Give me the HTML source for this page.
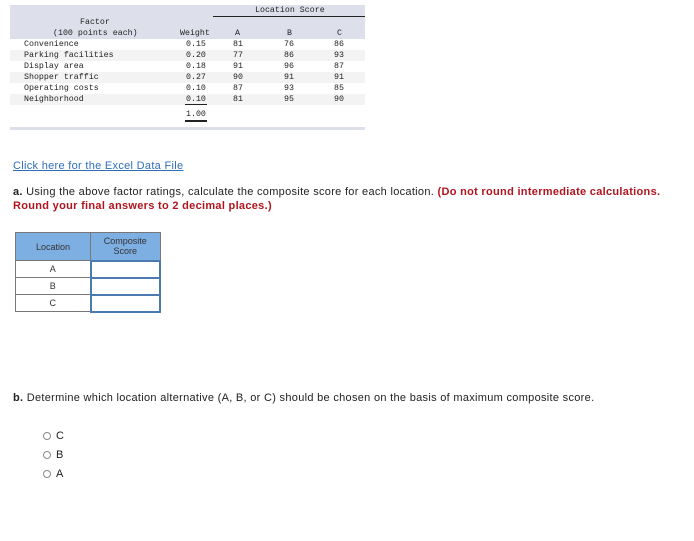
<!DOCTYPE html>
<html><head><style>
body{margin:0;width:694px;height:541px;background:#fff;position:relative;overflow:hidden;font-family:"Liberation Sans",sans-serif;}
.a{position:absolute;white-space:nowrap;}
.m{font-family:"Liberation Mono",monospace;font-size:8.3px;color:#222;line-height:11px;}
.s{font-size:11px;color:#222;letter-spacing:0.3px;}
.rad{position:absolute;width:6px;height:6px;border:1px solid #888;border-radius:50%;left:43px;}
td{border:1px solid #777;padding:0;text-align:center;font-size:9px;color:#333;}
</style></head><body>
<div class="a" style="left:10px;top:5px;width:355px;height:34px;background:#dde0ea"></div>
<div class="a" style="left:10px;top:50px;width:355px;height:11px;background:#f3f3f3"></div>
<div class="a" style="left:10px;top:72px;width:355px;height:11px;background:#f3f3f3"></div>
<div class="a" style="left:10px;top:94px;width:355px;height:11px;background:#f3f3f3"></div>
<div class="a" style="left:10px;top:127px;width:355px;height:3px;background:#dde0ea"></div>
<div class="a" style="left:213px;top:16px;width:152px;height:1px;background:#222"></div>
<div class="a m" style="left:255px;top:5px">Location Score</div>
<div class="a m" style="left:80px;top:17px">Factor</div>
<div class="a m" style="left:53px;top:28px">(100 points each)</div>
<div class="a m" style="left:180px;top:28px">Weight</div>
<div class="a m" style="left:235px;top:28px">A</div>
<div class="a m" style="left:287px;top:28px">B</div>
<div class="a m" style="left:337px;top:28px">C</div>
<div class="a m" style="left:24px;top:39px">Convenience<br>Parking facilities<br>Display area<br>Shopper traffic<br>Operating costs<br>Neighborhood</div>
<div class="a m" style="left:186px;top:39px">0.15<br>0.20<br>0.18<br>0.27<br>0.10<br>0.10</div>
<div class="a m" style="left:233px;top:39px">81<br>77<br>91<br>90<br>87<br>81</div>
<div class="a m" style="left:284px;top:39px">76<br>86<br>96<br>91<br>93<br>95</div>
<div class="a m" style="left:334px;top:39px">86<br>93<br>87<br>91<br>85<br>90</div>
<div class="a" style="left:185px;top:104px;width:22px;height:1px;background:#222"></div>
<div class="a m" style="left:186px;top:109px">1.00</div>
<div class="a" style="left:185px;top:120px;width:22px;height:2px;background:#222"></div>

<div class="a s" style="left:13px;top:160px;color:#2f6fb8;text-decoration:underline">Click here for the Excel Data File</div>
<div class="a s" style="left:13px;top:186px"><b>a.</b> Using the above factor ratings, calculate the composite score for each location. <b style="color:#b0141e">(Do not round intermediate calculations.</b></div>
<div class="a s" style="left:13px;top:200px;color:#b0141e;font-weight:bold">Round your final answers to 2 decimal places.)</div>

<table class="a" style="left:15px;top:232px;border-collapse:collapse;width:146px">
<tr style="height:28px;background:#7dafe2"><td style="width:74px">Location</td><td>Composite<br>Score</td></tr>
<tr style="height:17px"><td>A</td><td style="border:2px solid #4a7ab0"></td></tr>
<tr style="height:17px"><td>B</td><td style="border:2px solid #4a7ab0"></td></tr>
<tr style="height:17px"><td>C</td><td style="border:2px solid #4a7ab0"></td></tr>
</table>

<div class="a s" style="left:13px;top:392px"><b>b.</b> Determine which location alternative (A, B, or C) should be chosen on the basis of maximum composite score.</div>
<div class="rad" style="top:432px"></div><div class="a s" style="left:56px;top:430px">C</div>
<div class="rad" style="top:451px"></div><div class="a s" style="left:56px;top:449px">B</div>
<div class="rad" style="top:470px"></div><div class="a s" style="left:56px;top:468px">A</div>
</body></html>
